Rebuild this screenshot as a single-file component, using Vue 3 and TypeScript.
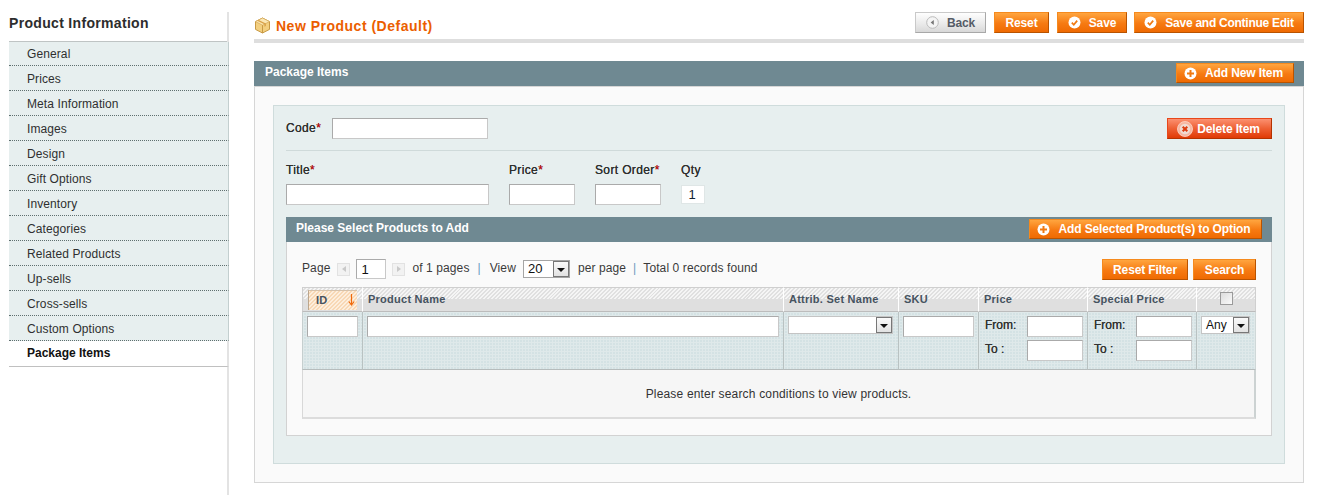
<script setup lang="ts">
const tabs: string[] = ['General','Prices','Meta Information','Images','Design','Gift Options','Inventory','Categories','Related Products','Up-sells','Cross-sells','Custom Options','Package Items']
</script>

<template>
  <div class="page">
    <aside class="side">
      <h3 class="side-title">Product Information</h3>
      <ul class="tabs">
        <li v-for="t in tabs" :key="t" :class="['tab', { active: t === 'Package Items' }]">{{ t }}</li>
      </ul>
    </aside>

    <main class="main">
      <header class="head">
        <svg class="box-ic" width="17" height="17" viewBox="0 0 17 17">
          <path d="M8.5 1 15.5 4.6V12.4L8.5 16 1.5 12.4V4.6Z" fill="#f3cf7f" stroke="#c89a45"/>
          <path d="M1.5 4.6 8.5 8.2 15.5 4.6 8.5 1Z" fill="#fbe7b4" stroke="#d2a858" stroke-width=".7"/>
          <path d="M8.5 8.2V16" stroke="#c89a45"/>
          <path d="M4.7 2.9 11.9 6.5V9L10.4 9.7V7.3L3.2 3.7Z" fill="#d9a24a"/>
        </svg>
        <h2 class="page-title">New Product (Default)</h2>
        <div class="actions">
          <button class="btn back" style="width:71px">
            <svg class="ic" width="13" height="13" viewBox="0 0 13 13"><circle cx="6.5" cy="6.5" r="5.8" fill="#f4f4f4" stroke="#bbb"/><path d="M7.8 4 4.6 6.5 7.8 9Z" fill="#777"/></svg>
            Back
          </button>
          <button class="btn" style="width:55px">Reset</button>
          <button class="btn" style="width:70px">
            <svg class="ic" width="13" height="13" viewBox="0 0 13 13"><circle cx="6.5" cy="6.5" r="6" fill="#fff"/><path d="M3.8 6.7 5.8 8.8 9.2 4.6" fill="none" stroke="#f07a12" stroke-width="1.7"/></svg>
            Save
          </button>
          <button class="btn tight" style="width:170px">
            <svg class="ic" width="13" height="13" viewBox="0 0 13 13"><circle cx="6.5" cy="6.5" r="6" fill="#fff"/><path d="M3.8 6.7 5.8 8.8 9.2 4.6" fill="none" stroke="#f07a12" stroke-width="1.7"/></svg>
            Save and Continue Edit
          </button>
        </div>
      </header>

      <section class="panel">
        <div class="bar">
          <h4>Package Items</h4>
          <button class="btn" style="width:118px">
            <svg class="ic" width="13" height="13" viewBox="0 0 13 13"><circle cx="6.5" cy="6.5" r="6" fill="#fff"/><path d="M6.5 3v7M3 6.500h7" stroke="#f07a12" stroke-width="2"/></svg>
            Add New Item
          </button>
        </div>

        <div class="panel-body">
          <div class="item">
            <div class="code-row">
              <label class="lbl code-lbl">Code<em>*</em></label>
              <input class="in code-in" />
              <button class="btn del" style="width:105px">
                <svg class="ic" width="16" height="16" viewBox="0 0 16 16"><circle cx="8" cy="8" r="7.500" fill="#f7b6a0" stroke="#fbd9cd" stroke-width=".8"/><circle cx="8" cy="8" r="5.200" fill="#f0dcd4"/><path d="M5.700 5.700l4.600 4.600M10.300 5.700l-4.600 4.600" stroke="#dd3c10" stroke-width="2"/></svg>
                Delete Item
              </button>
            </div>

            <div class="fields">
              <div class="fld w203"><label class="lbl">Title<em>*</em></label><input class="in" /></div>
              <div class="fld w66"><label class="lbl">Price<em>*</em></label><input class="in" /></div>
              <div class="fld w66"><label class="lbl">Sort Order<em>*</em></label><input class="in" /></div>
              <div class="fld w24"><label class="lbl">Qty</label><input class="qty" value="1" /></div>
            </div>

            <div class="bar sub">
              <h4>Please Select Products to Add</h4>
              <button class="btn" style="width:233px">
                <svg class="ic" width="13" height="13" viewBox="0 0 13 13"><circle cx="6.5" cy="6.5" r="6" fill="#fff"/><path d="M6.5 3v7M3 6.500h7" stroke="#f07a12" stroke-width="2"/></svg>
                Add Selected Product(s) to Option
              </button>
            </div>

            <div class="chooser">
              <div class="pager">
                <span class="pg-label">Page</span>
                <span class="pg-btn"><i class="tri left"></i></span>
                <input class="in pg-in" value="1" />
                <span class="pg-btn next"><i class="tri right"></i></span>
                <span>of 1 pages</span>
                <span class="sep">|</span>
                <span>View</span>
                <div class="sel view"><span>20</span><i class="arrow"></i></div>
                <span>per page</span>
                <span class="sep second">|</span>
                <span>Total 0 records found</span>
                <div class="filter-btns">
                  <button class="btn" style="width:86px">Reset Filter</button>
                  <button class="btn" style="width:63px">Search</button>
                </div>
              </div>

              <table class="grid">
                <colgroup>
                  <col style="width:61px" /><col style="width:421px" /><col style="width:115px" /><col style="width:80px" /><col style="width:109px" /><col style="width:109px" /><col style="width:59px" />
                </colgroup>
                <thead>
                  <tr>
                    <th class="sorted"><div class="sort-box">ID<svg width="7" height="12" viewBox="0 0 7 12"><path d="M3.500 0V10M.8 7.500 3.500 11 6.200 7.500" fill="none" stroke="#f0680a" stroke-width="1.200"/></svg></div></th>
                    <th>Product Name</th>
                    <th>Attrib. Set Name</th>
                    <th>SKU</th>
                    <th>Price</th>
                    <th>Special Price</th>
                    <th class="chk"><input type="checkbox" class="cb" /></th>
                  </tr>
                </thead>
                <tbody>
                  <tr class="filters">
                    <td><input class="in f-id" /></td>
                    <td><input class="in f-name" /></td>
                    <td><div class="sel f-set"><span></span><i class="arrow"></i></div></td>
                    <td><input class="in f-sku" /></td>
                    <td>
                      <div class="range"><span>From:</span><input class="in" /></div>
                      <div class="range"><span>To :</span><input class="in" /></div>
                    </td>
                    <td>
                      <div class="range"><span>From:</span><input class="in" /></div>
                      <div class="range"><span>To :</span><input class="in" /></div>
                    </td>
                    <td><div class="sel f-any"><span>Any</span><i class="arrow"></i></div></td>
                  </tr>
                  <tr class="empty">
                    <td colspan="7">Please enter search conditions to view products.</td>
                  </tr>
                </tbody>
              </table>
            </div>
          </div>
        </div>
      </section>
    </main>
  </div>
</template>

<style>
html, body { margin: 0; background: #fff; }
</style>

<style scoped>
.page {
  display: flex;
  height: 495px;
  overflow: hidden;
  padding-left: 9px;
  font: 12px/16px "Liberation Sans", Arial, sans-serif;
  color: #2f2f2f;
  box-sizing: border-box;
}
button, input { font-family: inherit; }
.side {
  width: 220px;
  margin-top: 12px;
  box-sizing: border-box;
  border-right: 2px solid #e3e3e3;
  flex: none;
}
.side-title {
  margin: 0;
  height: 29px;
  line-height: 22px;
  font-size: 14px;
  font-weight: bold;
  color: #2d2d2d;
  letter-spacing: .32px;
  border-bottom: 1px solid #bfc4c4;
}
.tabs { list-style: none; margin: 0; padding: 0; width: 220px; }
.tab {
  box-sizing: border-box;
  height: 25px;
  padding-left: 18px;
  line-height: 26px;
  letter-spacing: .1px;
  background: #e7efef;
  border-bottom: 1px dotted #5f6f6f;
  border-right: 1px solid #c3cfcf;
  color: #2f2f2f;
}
.tab:first-child { height: 24px; line-height: 24px; }
.tab.active {
  background: #fff;
  font-weight: bold;
  color: #111;
  height: 26px;
  line-height: 25px;
  letter-spacing: 0;
  border-bottom: 1px solid #c0c0c0;
  border-right: 2px solid #e3e3e3;
}
.main { width: 1050px; margin-left: 25px; flex: none; }
.head {
  display: flex;
  align-items: flex-start;
  height: 27px;
  padding-top: 12px;
  border-bottom: 4px solid #dedede;
}
.box-ic { margin: 5px 5px 0 0; flex: none; }
.page-title {
  margin: 5px 0 0;
  font-size: 14px;
  line-height: 18px;
  font-weight: bold;
  color: #eb5e00;
  letter-spacing: .5px;
}
.actions { margin-left: auto; display: flex; gap: 8px; }
.actions .btn:last-child { margin-left: -1px; }

.btn {
  box-sizing: border-box;
  height: 21px;
  padding: 0;
  display: inline-flex;
  align-items: center;
  justify-content: center;
  gap: 8px;
  border: 1px solid;
  border-color: #f58a1e #b95300 #b95300 #f58a1e;
  background: linear-gradient(#ffa53f, #f67a12 55%, #ef6a02);
  color: #fff;
  font-size: 12px;
  font-weight: bold;
  letter-spacing: -.12px;
  white-space: nowrap;
  flex: none;
}
.btn.tight { letter-spacing: -.26px; }
.btn .ic { flex: none; }
.btn.back {
  border-color: #c9c9c9 #a8a8a8 #a8a8a8 #c9c9c9;
  background: linear-gradient(#fefefe, #e9e9e9 60%, #d8d8d8);
  color: #555b66;
}
.btn.del {
  border-color: #e8471a #b43200 #b43200 #e8471a;
  background: linear-gradient(#fb9070, #ee6034 50%, #e03a05);
  gap: 4px;
  padding-right: 2px;
}

.panel { margin-top: 18px; }
.bar {
  box-sizing: border-box;
  height: 25px;
  background: #6f8992;
  display: flex;
  justify-content: space-between;
  padding: 2px 10px 0 11px;
}
.bar .btn { height: 20px; padding-right: 3px; }
.bar h4 {
  margin: 1px 0 0;
  color: #fff;
  font-size: 12px;
  font-weight: bold;
  line-height: 16px;
}
.panel-body {
  box-sizing: border-box;
  height: 397px;
  background: #fafafa;
  border: 1px solid #d6d6d6;
  padding: 18px;
}
.item {
  box-sizing: border-box;
  height: 359px;
  background: #e7efef;
  border: 1px solid #cfdcdc;
  padding: 12px 12px 0;
}
.code-row {
  box-sizing: border-box;
  display: flex;
  align-items: flex-start;
  height: 33px;
  border-bottom: 1px solid #cfdada;
}
.lbl { display: block; font-weight: normal; color: #2f2f2f; letter-spacing: .36px; text-shadow: 0 0 .4px #2f2f2f; }
.lbl em { color: #d40707; font-style: normal; }
.code-lbl { width: 46px; line-height: 21px; }
.in {
  box-sizing: border-box;
  height: 21px;
  border: 1px solid;
  border-color: #aaa #c8c8c8 #c8c8c8 #aaa;
  background: #fff;
  padding: 0 3px;
  font-size: 12px;
  margin: 0;
  display: block;
  border-radius: 0;
  outline: none;
}
.code-in { width: 156px; }
.del { margin-left: auto; }
.fields { display: flex; gap: 20px; padding-top: 11px; height: 55px; box-sizing: content-box; }
.fld .lbl { height: 22px; line-height: 16px; }
.fld .in { width: 100%; }
.w203 { width: 203px; }
.w66 { width: 66px; }
.w24 { width: 24px; }
.qty {
  box-sizing: border-box;
  width: 24px;
  height: 19px;
  margin: 1px 0 0;
  display: block;
  border: 1px solid #dfe6e6;
  background: #fff;
  text-align: center;
  padding: 0 2px 0 0;
  font-size: 13px;
  color: #123;
}
.bar.sub { padding-left: 10px; }
.chooser {
  box-sizing: border-box;
  height: 194px;
  background: #fafafa;
  border: 1px solid #d2d2d2;
  border-top: 0;
  padding: 17px 15px 0;
}
.pager {
  display: flex;
  align-items: center;
  height: 20px;
  color: #3a3a3a;
  letter-spacing: .1px;
  margin-bottom: 8px;
}
.pager > span { margin-right: 5px; padding-bottom: 2px; white-space: nowrap; }
.pager > .pg-label { margin-right: 7px; }
.pager > .pg-btn {
  box-sizing: border-box;
  width: 13px;
  height: 13px;
  padding: 0;
  background: #f2f2f2;
  border: 1px solid #e2e2e2;
  display: flex;
  align-items: center;
  justify-content: center;
  margin-right: 6px;
}
.pager > .pg-btn.next { margin: 0 7px 0 6px; }
.tri { width: 0; height: 0; border-top: 3px solid transparent; border-bottom: 3px solid transparent; }
.tri.left { border-right: 4px solid #c9c9c9; }
.tri.right { border-left: 4px solid #c9c9c9; }
.pg-in { width: 30px; height: 20px; font-size: 13px; color: #111; padding: 0 4px; }
.pager > .sep { color: #6d9bc0; margin: 0 9px 0 3px; }
.pager > .sep.second { margin: 0 7px 0 2px; }
.sel {
  box-sizing: border-box;
  position: relative;
  background: #fff;
  border: 1px solid #c4c4c4;
  display: flex;
  align-items: center;
  height: 18px;
  padding-left: 4px;
  font-size: 12px;
  color: #111;
}
.sel.view { width: 47px; margin: 0 8px 0 2px; border-color: #a5a5a5; font-size: 13px; }
.arrow {
  position: absolute;
  right: 0;
  top: 0;
  bottom: 0;
  width: 16px;
  box-sizing: border-box;
  background: linear-gradient(#fafafa, #e2e2e2);
  border: 1px solid #777;
}
.arrow::after {
  content: "";
  position: absolute;
  left: 3px;
  top: 6px;
  border-left: 4px solid transparent;
  border-right: 4px solid transparent;
  border-top: 4px solid #111;
}
.filter-btns { margin-left: auto; align-self: flex-start; display: flex; gap: 5px; letter-spacing: 0; }

.grid {
  width: 954px;
  table-layout: fixed;
  border-collapse: separate;
  border-spacing: 0;
}
.grid th {
  box-sizing: border-box;
  height: 25px;
  text-align: left;
  padding: 0 0 2px 5px;
  font-size: 11px;
  font-weight: bold;
  letter-spacing: .25px;
  color: #46535f;
  border-top: 1px solid #cfcfcf;
  border-bottom: 1px solid #bcbcbc;
  border-right: 1px solid #fff;
  background:
    linear-gradient(#0000 50%, #dfdfdf 50%),
    repeating-linear-gradient(135deg, #f5f5f5 0 1.4px, #e0e0e0 1.4px 2.8px);
  vertical-align: middle;
}
.grid th:first-child { border-left: 1px solid #cfcfcf; }
.grid th:last-child { border-right: 1px solid #cfcfcf; }
.grid th.sorted { padding: 0 5px 0 5px; }
.sort-box {
  box-sizing: border-box;
  height: 20px;
  display: flex;
  align-items: center;
  justify-content: space-between;
  padding: 0 2px 0 7px;
  background: repeating-linear-gradient(135deg, #fdeedd 0 1.4px, #f8d8b5 1.4px 2.8px);
  border-left: 1px solid #bba68d;
  border-top: 1px solid #d6c2ab;
}
.grid th.chk { text-align: center; padding: 0 0 2px; }
.cb {
  appearance: none;
  box-sizing: border-box;
  width: 13px;
  height: 13px;
  margin: 0 auto;
  display: block;
  border: 1px solid #9a9a9a;
  background: linear-gradient(135deg, #dcdcdc, #fafafa);
}
.filters td {
  box-sizing: border-box;
  height: 58px;
  vertical-align: top;
  padding: 4px 4px 0;
  background-color: #d4e2e4;
  background-image:
    linear-gradient(#dfe9ea 1px, #0000 1px),
    linear-gradient(90deg, #dfe9ea 1px, #0000 1px);
  background-size: 3px 3px;
  border-right: 1px solid #b9c2c2;
  border-bottom: 1px solid #b6bcbc;
}
.filters td:first-child { border-left: 1px solid #c6cfcf; }
.filters td:last-child { border-right: 1px solid #cfd8d8; }
.f-id, .f-name, .f-sku { width: 100%; }
.f-set { width: 105px; }
.f-any { width: 49px; }
.range {
  display: flex;
  justify-content: space-between;
  align-items: flex-start;
  height: 24px;
  line-height: 18px;
  color: #333;
  text-shadow: 0 0 .4px #333;
  padding-left: 2px;
}
.range .in { width: 56px; }
.empty td {
  box-sizing: border-box;
  height: 49px;
  text-align: center;
  letter-spacing: .17px;
  background: #f6f6f6;
  border: 1px solid #d8d8d8;
  border-top: 0;
  border-right: 2px solid #ccd2d2;
  border-bottom: 2px solid #dcdcdc;
  color: #333;
}
</style>
